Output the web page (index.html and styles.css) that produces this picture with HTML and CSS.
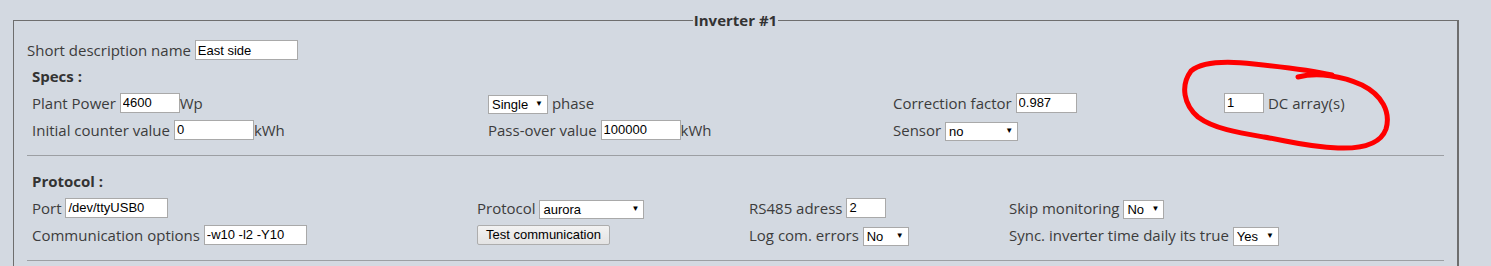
FILE: index.html
```html
<!DOCTYPE html>
<html lang="en">

<head>
    <meta charset="UTF-8">
    <title>Inverter settings</title>
    <link rel="stylesheet" href="styles.css">
</head>

<body>
    <fieldset class="inverter">
        <legend>Inverter #1</legend>
        <div class="name-row">Short description name <input class="w103" value="East side"></div>

        <div class="section">
            <h4>Specs :</h4>
            <div class="grid specs">
                <div class="cell">Plant Power <input class="w60" value="4600">Wp</div>
                <div class="cell"><span class="sel w60"><select><option>Single</option></select></span> phase</div>
                <div class="cell">Correction factor <input class="w61" value="0.987"></div>
                <div class="cell"><input class="w40" value="1"> DC array(s)</div>

                <div class="cell">Initial counter value <input class="w80" value="0">kWh</div>
                <div class="cell">Pass-over value <input class="w80" value="100000">kWh</div>
                <div class="cell">Sensor <span class="sel w73"><select><option>no</option></select></span></div>
                <div class="cell"></div>
            </div>
        </div>
        <hr>

        <div class="section">
            <h4>Protocol :</h4>
            <div class="grid protocol">
                <div class="cell">Port <input class="w103" value="/dev/ttyUSB0"></div>
                <div class="cell">Protocol <span class="sel w105"><select><option>aurora</option></select></span></div>
                <div class="cell">RS485 adress <input class="w40" value="2"></div>
                <div class="cell">Skip monitoring <span class="sel w41"><select><option>No</option></select></span></div>

                <div class="cell">Communication options <input class="w103" value="-w10 -l2 -Y10"></div>
                <div class="cell"><button>Test communication</button></div>
                <div class="cell">Log com. errors <span class="sel w46"><select><option>No</option></select></span></div>
                <div class="cell">Sync. inverter time daily its true <span class="sel w46"><select><option>Yes</option></select></span></div>
            </div>
        </div>
        <hr>
    </fieldset>

    <!-- hand drawn marker round the DC array field -->
    <svg class="scribble" width="1491" height="266" viewBox="0 0 1491 266">
        <path d="M1298,77 C1318,72 1342,76 1362,85 C1382,95 1391,112 1386,129 C1381,143 1364,149 1338,148 C1308,147 1288,141 1264,137 C1240,133 1214,129 1198,117 C1184,105 1180,86 1191,71 C1203,61 1228,61 1254,64 C1284,67 1310,70 1332,75"
            fill="none" stroke="#f00" stroke-width="5" stroke-linecap="round" stroke-linejoin="round" />
    </svg>
</body>

</html>
```

FILE: styles.css
```css
body {
    margin: 0;
    background: #d3d9e1;
    font-family: "Open Sans", "Noto Sans", sans-serif;
    font-size: 15px;
    color: #3c3c3c;
    height: 266px;
    overflow: hidden;
}

.inverter {
    width: 1446px;
    box-sizing: border-box;
    margin: 11px 0 0 13px;
    padding: 10px 13px 0 13px;
    border: 1px solid #6e6e6e;
    border-right-width: 2px;
    min-height: 300px;
}

.inverter legend {
    margin: 0 auto;
    padding: 0 1px;
    font-size: 15px;
    font-weight: bold;
    color: #333;
    line-height: 18px;
}

.name-row {
    height: 22px;
    display: flex;
    align-items: center;
    white-space: pre;
}

.section {
    padding-left: 5px;
}

.section h4 {
    margin: 0;
    height: 28px;
    line-height: 30px;
    font-size: 15px;
    color: #333;
}

.grid {
    display: grid;
}

.specs {
    grid-template-columns: 456px 405px 331px 1fr;
}

.protocol {
    grid-template-columns: 445px 272px 260px 1fr;
}

.cell {
    height: 27px;
    display: flex;
    align-items: center;
    white-space: pre;
}

hr {
    margin: 12px 0 10px 0;
    border: none;
    border-top: 1px solid #9c9fa3;
    height: 0;
}

input {
    box-sizing: border-box;
    height: 20px;
    margin: 0;
    padding: 0 2px;
    border: 1px solid #a9a9a9;
    background: #fff;
    font-family: "Liberation Sans", Arial, sans-serif;
    font-size: 13px;
    color: #000;
}

.sel {
    display: inline-block;
    position: relative;
    height: 19px;
}

.sel select {
    appearance: none;
    box-sizing: border-box;
    width: 100%;
    height: 19px;
    margin: 0;
    padding: 0 14px 0 3px;
    border: 1px solid #a9a9a9;
    border-radius: 0;
    background: #fff;
    font-family: "Liberation Sans", Arial, sans-serif;
    font-size: 13px;
    color: #000;
}

.sel::after {
    content: "\25BC";
    position: absolute;
    right: 5px;
    top: 4px;
    font-size: 8px;
    color: #000;
    pointer-events: none;
}

button {
    box-sizing: border-box;
    height: 20px;
    width: 133px;
    padding: 0;
    border: 1px solid #adadad;
    border-radius: 2px;
    background: linear-gradient(#f2f2f2, #e3e3e3);
    font-family: "Liberation Sans", Arial, sans-serif;
    font-size: 13px;
    color: #000;
}

.w40 { width: 40px; }
.w41 { width: 41px; }
.w46 { width: 46px; }
.w60 { width: 60px; }
.w61 { width: 61px; }
.w73 { width: 73px; }
.w80 { width: 80px; }
.w103 { width: 103px; }
.w105 { width: 105px; }

.scribble {
    position: absolute;
    left: 0;
    top: 0;
    pointer-events: none;
}
```
